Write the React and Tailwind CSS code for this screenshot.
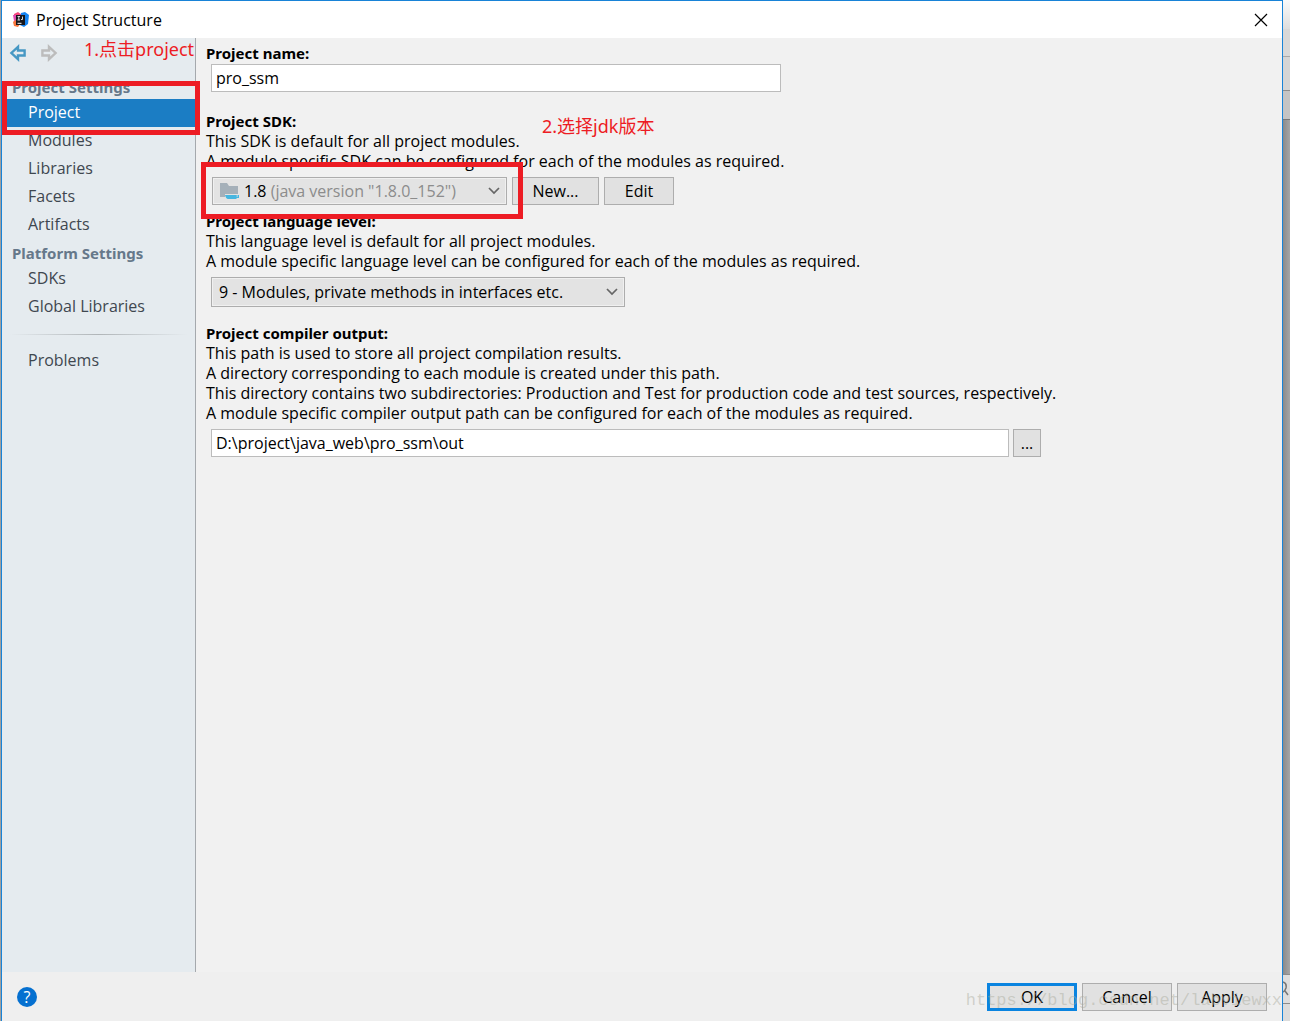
import React from 'react';

const projectSettings = ['Project', 'Modules', 'Libraries', 'Facets', 'Artifacts'];
const platformSettings = ['SDKs', 'Global Libraries'];

function LogoIcon() {
  return (
    <svg width="16" height="16" viewBox="0 0 16 16" aria-hidden="true">
      <path d="M1 2 L5 0 L9 3 L6 9 L1 8 Z" fill="#f5447b" />
      <path d="M0 10 L3 7 L7 12 L5 15 L1 14 Z" fill="#f8763c" />
      <path d="M8 1 L12 0 L16 3 L15 12 L11 15 L7 13 Z" fill="#1583f0" />
      <path d="M0 3 L3 3 L3 8 L1 9 Z" fill="#e04bb0" />
      <rect x="3" y="3" width="9" height="10" fill="#17171c" />
      <path d="M4.5 4.5h2.5M5.8 4.5v3.5M4.5 8h2.5M9.5 4.5v3H8" stroke="#d8d8d8" strokeWidth="1" fill="none" />
      <path d="M4.5 11.3h4" stroke="#fff" strokeWidth="1" />
    </svg>
  );
}

function ArrowIcon({ color, flip }) {
  return (
    <svg width="18" height="18" viewBox="0 0 18 18" aria-hidden="true" className={flip ? '-scale-x-100' : ''}>
      <path d="M9 2.8 L2.4 9 L9 15.2 V11.5 H15.6 V6.5 H9 Z" fill="none" stroke={color} strokeWidth="2.4" />
    </svg>
  );
}

function FolderIcon() {
  return (
    <svg width="20" height="18" viewBox="0 0 20 18" aria-hidden="true">
      <path d="M0 1h7l2 3h9v8H5v3H0z" fill="#a5b0b9" />
      <path d="M5 13h14v3h-2l-1 1H8q-2 0-3-4z" fill="#46b6e0" />
      <path d="M16.5 14h1.5" stroke="#e3e3e3" />
    </svg>
  );
}

function Chevron() {
  return (
    <svg
      width="12"
      height="8"
      viewBox="0 0 12 8"
      aria-hidden="true"
      className="pointer-events-none absolute right-[7px] top-1/2 -translate-y-1/2"
    >
      <path d="M1 1l5 5 5-5" fill="none" stroke="#666" strokeWidth="1.7" />
    </svg>
  );
}

function NavHeading({ children }) {
  return (
    <h2 className="h-[26px] pl-[10px] pt-1 font-['Noto_Sans',sans-serif] text-[15px] font-bold leading-5 text-[#66788a]">
      {children}
    </h2>
  );
}

function NavItem({ label, active }) {
  return (
    <li>
      <a
        href="#"
        aria-current={active ? 'page' : undefined}
        className={`block h-7 pl-[26px] leading-[26px] ${active ? 'bg-[#1b7dc4] text-white' : 'text-[#3f474f]'}`}
      >
        {label}
      </a>
    </li>
  );
}

function Sidebar() {
  return (
    <nav className="relative w-[194px] shrink-0 border-r border-[#a5a9ad] bg-[#e5ebef]">
      <div className="flex h-[35px] items-start gap-[13px] pl-[7px] pt-[6px]">
        <button type="button" aria-label="Back">
          <ArrowIcon color="#4698c4" />
        </button>
        <button type="button" aria-label="Forward">
          <ArrowIcon color="#bcbcbc" flip />
        </button>
      </div>
      <NavHeading>Project Settings</NavHeading>
      <ul>
        {projectSettings.map((label) => (
          <NavItem key={label} label={label} active={label === 'Project'} />
        ))}
      </ul>
      <NavHeading>Platform Settings</NavHeading>
      <ul>
        {platformSettings.map((label) => (
          <NavItem key={label} label={label} />
        ))}
      </ul>
      <div className="mx-2 mb-3 mt-[13px] h-px bg-linear-to-r from-transparent via-[#b0b5b8] to-transparent" />
      <ul>
        <NavItem label="Problems" />
      </ul>
      <p className="absolute left-[82px] top-0 whitespace-nowrap font-['Noto_Sans','Noto_Sans_CJK_SC',sans-serif] text-lg leading-[22px] text-[#ed1c24]">
        1.点击project
      </p>
      <div className="pointer-events-none absolute -right-[5px] left-0 top-[43px] h-[54px] border-[5px] border-[#ed1c24]" />
    </nav>
  );
}

function Button({ className, children, ...rest }) {
  return (
    <button type="button" className={`h-7 border border-[#adadad] bg-[#e1e1e1] leading-6 ${className}`} {...rest}>
      {children}
    </button>
  );
}

function FieldLabel({ htmlFor, children }) {
  return (
    <label htmlFor={htmlFor} className="block font-['Noto_Sans',sans-serif] text-[15px] font-bold">
      {children}
    </label>
  );
}

function ProjectForm() {
  return (
    <main className="min-w-0 flex-1 bg-[#f1f1f1] pl-[10px] pt-[5px] leading-5">
      <section>
        <FieldLabel htmlFor="name">Project name:</FieldLabel>
        <input
          id="name"
          defaultValue="pro_ssm"
          className="ml-[5px] mt-px block h-7 w-[570px] border border-[#bcbcbc] bg-white px-1"
        />
      </section>

      <section className="relative mt-[19px]">
        <FieldLabel htmlFor="sdk">Project SDK:</FieldLabel>
        <p>This SDK is default for all project modules.</p>
        <p>A module specific SDK can be configured for each of the modules as required.</p>
        <div className="ml-[6px] mt-[6px] flex gap-[5px]">
          <div className="relative h-7 w-[295px]">
            <select
              id="sdk"
              className="h-full w-full appearance-none border border-[#adadad] bg-[#e3e3e3] text-transparent inset-ring inset-ring-[#f0f0f0]"
            >
              <option>1.8 (java version "1.8.0_152")</option>
            </select>
            <div className="pointer-events-none absolute inset-0 flex items-center gap-1 pl-2" aria-hidden="true">
              <FolderIcon />
              <span>
                1.8 <span className="text-[#8c8c8c]">(java version "1.8.0_152")</span>
              </span>
            </div>
            <Chevron />
          </div>
          <Button className="w-[87px]">New...</Button>
          <Button className="w-[70px]">Edit</Button>
        </div>
        <p className="absolute left-[336px] top-[3px] whitespace-nowrap font-['Noto_Sans','Noto_Sans_CJK_SC',sans-serif] text-lg leading-6 text-[#ed1c24]">
          2.选择jdk版本
        </p>
        <div className="pointer-events-none absolute -left-[5px] top-[51px] z-10 h-[57px] w-[322px] border-[5px] border-[#ed1c24]" />
      </section>

      <section className="mt-[6px]">
        <FieldLabel htmlFor="level">Project language level:</FieldLabel>
        <p>This language level is default for all project modules.</p>
        <p>A module specific language level can be configured for each of the modules as required.</p>
        <div className="relative ml-[5px] mt-[6px] h-[30px] w-[414px]">
          <select
            id="level"
            className="h-full w-full appearance-none border border-[#adadad] bg-[#e3e3e3] pl-[7px] inset-ring inset-ring-[#f0f0f0]"
          >
            <option>9 - Modules, private methods in interfaces etc.</option>
          </select>
          <Chevron />
        </div>
      </section>

      <section className="mt-4">
        <FieldLabel htmlFor="output">Project compiler output:</FieldLabel>
        <p>This path is used to store all project compilation results.</p>
        <p>A directory corresponding to each module is created under this path.</p>
        <p>
          This directory contains two subdirectories: Production and Test for production code and test sources,
          respectively.
        </p>
        <p>A module specific compiler output path can be configured for each of the modules as required.</p>
        <div className="ml-[5px] mt-[6px] flex max-w-[830px] gap-1">
          <input
            id="output"
            defaultValue="D:\project\java_web\pro_ssm\out"
            className="h-7 min-w-0 flex-1 border border-[#bcbcbc] bg-white px-1"
          />
          <Button className="w-7" aria-label="Browse">
            ...
          </Button>
        </div>
      </section>
    </main>
  );
}

function Footer() {
  return (
    <footer className="relative flex h-[49px] items-start justify-between bg-[#efefef] px-[15px] pt-[11px]">
      <button
        type="button"
        aria-label="Help"
        className="mt-1 h-5 w-5 rounded-full bg-[#0570d0] text-center leading-5 text-white"
      >
        ?
      </button>
      <div className="flex gap-[5px]">
        <button type="button" className="h-7 w-[90px] border-3 border-[#0a84e0] bg-[#e1e1e1] leading-5">
          OK
        </button>
        <Button className="w-[90px]">Cancel</Button>
        <Button className="w-[90px]">Apply</Button>
      </div>
      <p className="pointer-events-none absolute right-0 top-[17px] whitespace-nowrap font-['Liberation_Mono',monospace] text-[17px] leading-6 text-[#a8aa9c]/45">
        https://blog.csdn.net/labviewxx
      </p>
    </footer>
  );
}

// slice of the editor window that stays visible next to the dialog
function Backdrop() {
  return (
    <div className="flex w-[7px] shrink-0 flex-col overflow-hidden" aria-hidden="true">
      <div className="h-[29px] bg-linear-to-b from-[#fafafa] to-[#dedede]" />
      <div className="h-7 border-b border-[#a8a8a8] bg-[#d8d8d8]" />
      <div className="h-[34px] border-b border-[#8c8c8c] bg-[#d5d5d5]" />
      <div className="h-[29px] border-b border-[#777] bg-[#c4c4c4]" />
      <div className="flex-1 bg-linear-to-r from-[#8b8b8b] to-[#a6a6a6]" />
      <div className="flex h-[30px] items-center border-y border-[#8c8c8c] bg-[#dedede]">
        <svg width="7" height="16" viewBox="0 0 7 16">
          <path d="M0 1q4 1 3 6q-1 3-3 4M2 10l3 4" fill="none" stroke="#777" strokeWidth="1.5" />
        </svg>
      </div>
      <div className="h-[17px] bg-[#dcdcdc]" />
    </div>
  );
}

export default function App() {
  return (
    <div className="flex min-h-screen bg-[#a0a0a0] font-['Open_Sans','Noto_Sans_CJK_SC',sans-serif] text-base text-black">
      <div className="ml-px flex min-w-0 flex-1 flex-col border-x border-t border-[#1883d7] bg-[#f1f1f1]">
        <header className="flex h-[37px] items-center justify-between bg-white pl-[11px] pr-[14px]">
          <div className="flex items-center gap-[7px]">
            <LogoIcon />
            <h1>Project Structure</h1>
          </div>
          <button type="button" aria-label="Close">
            <svg width="14" height="14" viewBox="0 0 14 14" aria-hidden="true">
              <path d="M1 1l12 12M13 1L1 13" stroke="#000" strokeWidth="1.2" />
            </svg>
          </button>
        </header>
        <div className="flex flex-1">
          <Sidebar />
          <ProjectForm />
        </div>
        <Footer />
      </div>
      <Backdrop />
    </div>
  );
}
